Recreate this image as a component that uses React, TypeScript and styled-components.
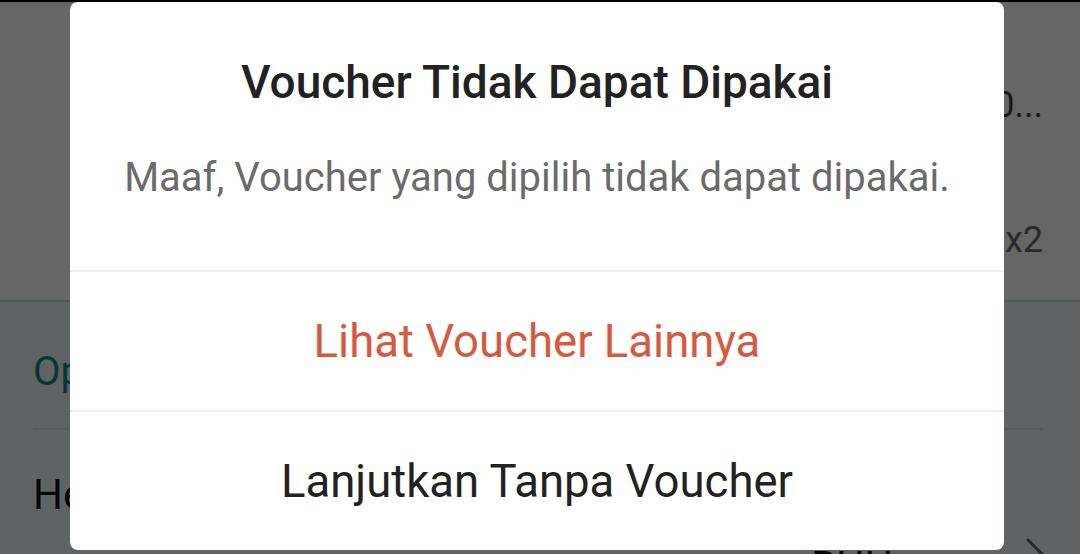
import styled, { createGlobalStyle } from 'styled-components';

const GlobalStyle = createGlobalStyle`
  html, body {
    margin: 0;
    padding: 0;
    height: 100%;
    overflow: hidden;
  }
  body {
    font-family: Roboto, 'Noto Sans', sans-serif;
    background: #fff;
  }
`;

const Screen = styled.div`
  position: relative;
  width: 1080px;
  height: 554px;
  overflow: hidden;
  display: flex;
  flex-direction: column;
  border-top: 2px solid #000;
  box-sizing: border-box;
`;

const Summary = styled.section`
  height: 300px;
  flex-shrink: 0;
  box-sizing: border-box;
  background: #fff;
  border-bottom: 2px solid #c6e1e1;
  display: flex;
  flex-direction: column;
  align-items: flex-end;
  gap: 95px;
  padding: 83px 37px 0 0;
`;

const SummaryText = styled.span<{ $tone?: string }>`
  font-size: 36px;
  line-height: 40px;
  color: ${({ $tone }) => $tone || '#555'};
  white-space: nowrap;
`;

const Options = styled.section`
  flex: 1;
  background: #eef8f8;
  padding: 0 37px 0 33px;
`;

const OptionsTitle = styled.h2`
  margin: 0;
  padding-top: 50px;
  font-size: 40px;
  line-height: 40px;
  font-weight: 400;
  color: #0d8f78;
`;

const Divider = styled.hr<{ $color?: string }>`
  margin: 36px 0 0;
  border: 0;
  height: 2px;
  background: ${({ $color }) => $color || '#dae4e4'};
`;

const OptionRow = styled.div`
  display: flex;
  justify-content: space-between;
  align-items: flex-start;
  padding-top: 43px;
`;

const OptionLabel = styled.span`
  font-size: 42px;
  line-height: 44px;
  color: #111;
`;

const OptionValue = styled.div`
  display: flex;
  align-items: flex-start;
  gap: 130px;
  padding-top: 64px;
  font-size: 40px;
  line-height: 40px;
  color: #111;
`;

const ValueText = styled.span`
  margin-top: 10px;
`;

const Chevron = styled.svg`
  width: 26px;
  height: 40px;
  margin-right: -6px;
`;

const Overlay = styled.div`
  position: absolute;
  inset: 0;
  background: rgba(0, 0, 0, 0.6);
`;

const Dialog = styled.div`
  position: absolute;
  top: 0;
  left: 70px;
  width: 934px;
  height: 548px;
  background: #fff;
  border-radius: 8px;
  display: flex;
  flex-direction: column;
  overflow: hidden;
`;

const DialogHeader = styled.div`
  height: 268px;
  box-sizing: border-box;
  padding-top: 56px;
  text-align: center;
`;

const DialogTitle = styled.h1`
  margin: 0;
  font-size: 46px;
  line-height: 48px;
  font-weight: 500;
  color: #222;
`;

const DialogMessage = styled.p`
  margin: 52px 0 0;
  font-size: 40px;
  line-height: 40px;
  color: #6b6b6b;
`;

const DialogDivider = styled.div`
  height: 2px;
  background: #eeeeee;
`;

const DialogButton = styled.button<{ $accent?: boolean }>`
  height: 138px;
  border: 0;
  background: transparent;
  font-family: inherit;
  font-size: 45.5px;
  color: ${({ $accent }) => ($accent ? '#d65a3f' : '#222')};
  cursor: pointer;
`;

export default function App() {
  return (
    <>
      <GlobalStyle />
      <Screen>
        <Summary>
          <SummaryText $tone="#444">Paket Hemat 100...</SummaryText>
          <SummaryText $tone="#6a6a6a">x2</SummaryText>
        </Summary>
        <Options>
          <OptionsTitle>Opsi Pengiriman</OptionsTitle>
          <Divider />
          <OptionRow>
            <OptionLabel>Hemat</OptionLabel>
            <OptionValue>
              <ValueText>RHH</ValueText>
              <Chevron viewBox="0 0 26 40">
                <path d="M4 2 L22 20 L4 38" fill="none" stroke="#666" strokeWidth="3" />
              </Chevron>
            </OptionValue>
          </OptionRow>
        </Options>
        <Overlay />
        <Dialog>
          <DialogHeader>
            <DialogTitle>Voucher Tidak Dapat Dipakai</DialogTitle>
            <DialogMessage>Maaf, Voucher yang dipilih tidak dapat dipakai.</DialogMessage>
          </DialogHeader>
          <DialogDivider />
          <DialogButton $accent>Lihat Voucher Lainnya</DialogButton>
          <DialogDivider />
          <DialogButton>Lanjutkan Tanpa Voucher</DialogButton>
        </Dialog>
      </Screen>
    </>
  );
}
